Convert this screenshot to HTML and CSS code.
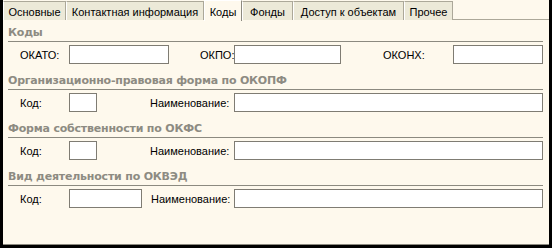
FILE: index.html
```html
<!DOCTYPE html>
<html lang="ru">
<head>
    <meta charset="UTF-8">
    <title>Коды</title>
    <link rel="stylesheet" href="styles.css">
</head>
<body>
<div class="window">
    <div class="tabs">
        <div class="tab tab-main">Основные</div>
        <div class="tab tab-contact">Контактная информация</div>
        <div class="tab tab-codes active">Коды</div>
        <div class="tab tab-funds">Фонды</div>
        <div class="tab tab-access">Доступ к объектам</div>
        <div class="tab tab-other">Прочее</div>
    </div>
    <div class="panel">
        <div class="group first">
            <div class="group-title">Коды</div>
            <div class="row">
                <label class="lbl lbl-okato">ОКАТО:</label>
                <input type="text" class="field f-okato">
                <label class="lbl lbl-okpo">ОКПО:</label>
                <input type="text" class="field f-okpo">
                <label class="lbl lbl-okonh">ОКОНХ:</label>
                <input type="text" class="field f-okonh">
            </div>
        </div>
        <div class="group">
            <div class="group-title">Организационно-правовая форма по ОКОПФ</div>
            <div class="row">
                <label class="lbl lbl-code">Код:</label>
                <input type="text" class="field f-code-sm">
                <label class="lbl lbl-name">Наименование:</label>
                <input type="text" class="field f-name">
            </div>
        </div>
        <div class="group">
            <div class="group-title">Форма собственности по ОКФС</div>
            <div class="row">
                <label class="lbl lbl-code">Код:</label>
                <input type="text" class="field f-code-sm">
                <label class="lbl lbl-name">Наименование:</label>
                <input type="text" class="field f-name">
            </div>
        </div>
        <div class="group">
            <div class="group-title">Вид деятельности по ОКВЭД</div>
            <div class="row">
                <label class="lbl lbl-code">Код:</label>
                <input type="text" class="field f-code-lg">
                <label class="lbl lbl-name2">Наименование:</label>
                <input type="text" class="field f-name">
            </div>
        </div>
    </div>
</div>
</body>
</html>
```

FILE: styles.css
```css
body {
    margin: 0;
    background: #000;
    font-family: "Liberation Sans", Arial, sans-serif;
    font-size: 11px;
    color: #000;
}

.window {
    margin-left: 3px;
    width: 546px;
    height: 245px;
    background: #fef9ed;
    border-bottom: 1px solid #8c8a80;
    box-sizing: border-box;
    display: flex;
    flex-direction: column;
}

.tabs {
    display: flex;
    height: 20px;
    border-bottom: 1px solid #aca899;
    box-sizing: border-box;
}

.tab {
    height: 19px;
    margin-top: 1px;
    box-sizing: border-box;
    background: #ece9d8;
    border: 1px solid #aca899;
    border-bottom: none;
    border-left-color: #fff;
    display: flex;
    align-items: center;
    justify-content: center;
    padding-top: 1px;
}

.tab.active {
    background: #fef9ed;
    height: 21px;
    margin-top: 0;
    margin-bottom: -1px;
    border-left-color: #fff;
    border-top-color: #fff;
    border-right-color: #8c8a80;
}

.tab-main { width: 63px; }
.tab-contact { width: 138px; }
.tab-codes { width: 38px; }
.tab-funds { width: 51px; }
.tab-access { width: 111px; }
.tab-other { width: 49px; }

.panel {
    padding: 0 6px 0 5px;
}

.group + .group {
    margin-top: 2px;
}

.group-title {
    height: 22px;
    box-sizing: border-box;
    border-bottom: 1px solid #8c8a80;
    display: flex;
    align-items: flex-end;
    padding-bottom: 2px;
    font-family: "DejaVu Sans", sans-serif;
    font-weight: bold;
    font-size: 11px;
    letter-spacing: -0.2px;
    color: #8d8b82;
    line-height: 13px;
}

.group:not(.first) .group-title {
    height: 24px;
}

.row {
    display: flex;
    align-items: center;
    margin-top: 3px;
    height: 19px;
}

.lbl {
    display: block;
    flex-shrink: 0;
    white-space: nowrap;
}

.field {
    flex-shrink: 0;
    height: 19px;
    box-sizing: border-box;
    border: 1px solid #7f7c73;
    background: #fff;
    padding: 0;
    margin: 0;
    outline: none;
}

.lbl-okato { margin-left: 12px; width: 49px; }
.f-okato { width: 100px; }
.lbl-okpo { margin-left: 31px; width: 34px; }
.f-okpo { width: 107px; }
.lbl-okonh { margin-left: 42px; width: 70px; }
.f-okonh { width: 90px; }

.lbl-code { margin-left: 12px; width: 49px; }
.f-code-sm { width: 28px; }
.f-code-lg { width: 73px; }
.lbl-name { margin-left: 53px; width: 84px; }
.lbl-name2 { margin-left: 9px; width: 83px; }
.f-name { width: 309px; }
```
